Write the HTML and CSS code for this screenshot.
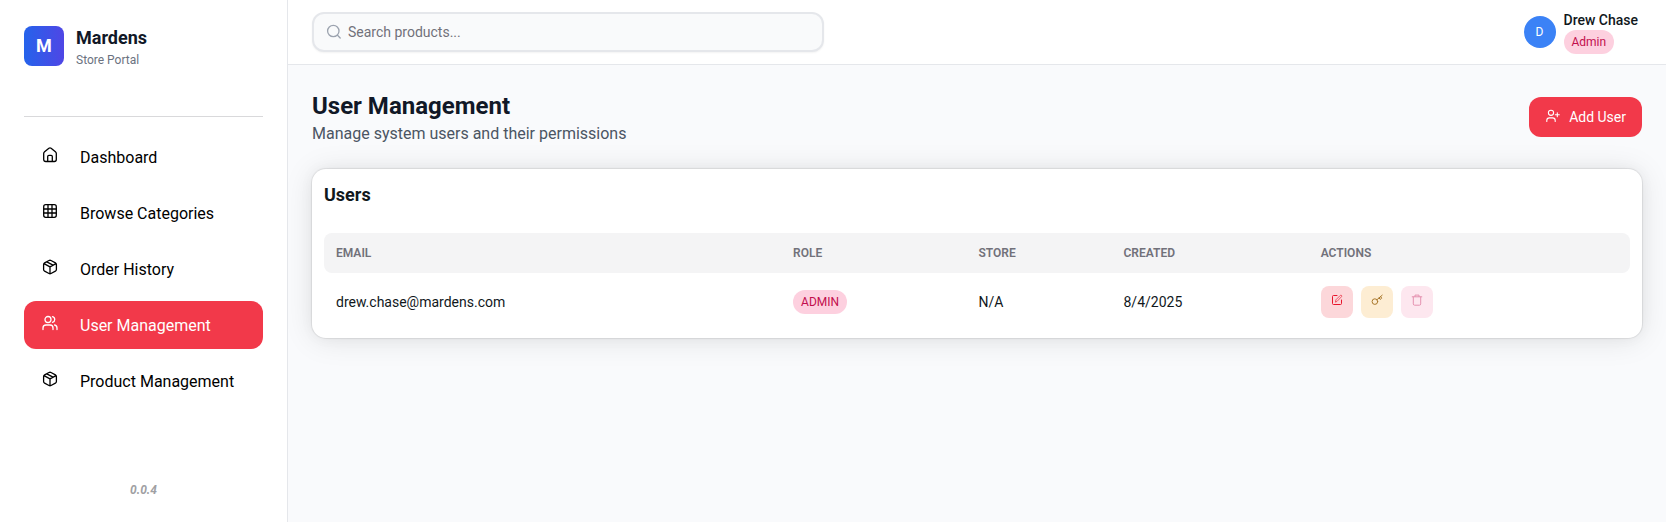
FILE: index.html
```
<!DOCTYPE html>
<html lang="en">
<head>
<meta charset="utf-8">
<title>User Management - Mardens Store Portal</title>
<link rel="stylesheet" href="styles.css">
</head>
<body>
<svg class="sprite" aria-hidden="true">
  <symbol id="box" viewBox="0 0 16 16">
    <path d="M7 1.500q1-.5 2 0l4.400 2.300q1 .5 1 1.700v5q0 1.200-1 1.700L9 14.500q-1 .5-2 0l-4.400-2.300q-1-.5-1-1.700v-5q0-1.200 1-1.700zM2 4.700l6 3.100 6-3.100M8 7.800v6.900M4.800 2.900l6.200 3.200"/>
  </symbol>
</svg>
<div class="app">
  <aside class="sidebar">
    <div class="brand">
      <div class="logo">M</div>
      <div>
        <div class="brand-name">Mardens</div>
        <div class="brand-sub">Store Portal</div>
      </div>
    </div>
    <nav class="nav">
      <a class="nav-item" href="#"><svg class="icon" viewBox="0 0 16 16"><path d="M1.700 6.500Q1.700 5.700 2.300 5.100L6.900 1.300q1.100-.8 2.200 0l4.600 3.800q.6.6.6 1.400v6q0 2-2 2H3.700q-2 0-2-2zM5.700 14.500V9.500q0-1.200 1.200-1.200h2.200q1.200 0 1.200 1.200v5"/></svg><span>Dashboard</span></a>
      <a class="nav-item" href="#"><svg class="icon" viewBox="0 0 16 16"><rect x="1.700" y="1.700" width="12.600" height="12.600" rx="2"/><path d="M6 1.700v12.600M10 1.700v12.600M1.700 6h12.600M1.700 10h12.600"/></svg><span>Browse Categories</span></a>
      <a class="nav-item" href="#"><svg class="icon"><use href="#box"/></svg><span>Order History</span></a>
      <a class="nav-item active" href="#" aria-current="page"><svg class="icon" viewBox="0 0 16 16"><circle cx="6" cy="4.500" r="3"/><path d="M1 14.500v-1.500q0-3 3-3h4q3 0 3 3v1.500M10.500 1.600a3 3 0 0 1 0 5.800M12.600 10q2.400.6 2.400 3v1.500"/></svg><span>User Management</span></a>
      <a class="nav-item" href="#"><svg class="icon"><use href="#box"/></svg><span>Product Management</span></a>
    </nav>
    <div class="version">0.0.4</div>
  </aside>
  <div class="page">
    <header class="topbar">
      <label class="search">
        <svg class="icon" viewBox="0 0 16 16"><circle cx="7.300" cy="7" r="5.700"/><path d="m11.500 11.300 2.700 2.700"/></svg>
        <input type="search" placeholder="Search products..." aria-label="Search products">
      </label>
      <button class="account" type="button">
        <span class="avatar">D</span>
        <span class="account-text">
          <span class="account-name">Drew Chase</span>
          <span class="chip">Admin</span>
        </span>
      </button>
    </header>
    <main class="main">
      <div class="heading">
        <div>
          <h1>User Management</h1>
          <p>Manage system users and their permissions</p>
        </div>
        <button class="add" type="button"><svg class="icon" viewBox="0 0 16 16"><circle cx="6" cy="4.800" r="2.600"/><path d="M1.800 13.500v-1q0-2.600 2.600-2.600h3.200q2.600 0 2.600 2.600v1M12.300 4.800v4M10.300 6.800h4"/></svg><span>Add User</span></button>
      </div>
      <section class="card">
        <h2>Users</h2>
        <table>
          <colgroup><col class="c-email"><col class="c-role"><col class="c-store"><col class="c-created"><col class="c-actions"></colgroup>
          <thead>
            <tr><th>EMAIL</th><th>ROLE</th><th>STORE</th><th>CREATED</th><th>ACTIONS</th></tr>
          </thead>
          <tbody>
            <tr>
              <td>drew.chase@mardens.com</td>
              <td><span class="chip">ADMIN</span></td>
              <td>N/A</td>
              <td>8/4/2025</td>
              <td>
                <div class="actions">
                  <button class="act edit" type="button" aria-label="Edit user"><svg viewBox="0 0 12 12"><path d="M6 1.500H2.500q-1 0-1 1v7q0 1 1 1h7q1 0 1-1V6"/><path class="soft" d="m4.500 7.800.4-2L9.300 1.400q.6-.5 1.200 0 .6.700 0 1.300L6.200 7.200z"/></svg></button>
                  <button class="act key" type="button" aria-label="Reset password"><svg viewBox="0 0 12 12"><circle cx="3.900" cy="7.600" r="2.800"/><path d="m6 5.700 5.200-4.500M8.100 4l1.100 1.400 1.500-1.200-1-1.500"/></svg></button>
                  <button class="act trash" type="button" aria-label="Delete user" disabled><svg viewBox="0 0 12 12"><path d="M1.200 2.800h9.600M4 2.600V1.100h4v1.500M2.300 3v6.900q0 1.300 1.300 1.300h4.800q1.300 0 1.300-1.300V3"/></svg></button>
                </div>
              </td>
            </tr>
          </tbody>
        </table>
      </section>
    </main>
  </div>
</div>
</body>
</html>
```
FILE: styles.css
```
* { box-sizing: border-box; }
body {
  margin: 0;
  font-family: Roboto, "Liberation Sans", sans-serif;
  font-size: 14px;
  line-height: 20px;
  color: #11181c;
}
h1, h2, p { margin: 0; }
button { font: inherit; border: 0; cursor: pointer; }
svg { fill: none; stroke: currentColor; stroke-linecap: round; stroke-linejoin: round; }
.sprite { display: none; }
.icon { width: 16px; height: 16px; flex: none; stroke-width: 1.3; }

.app { display: flex; min-height: 100vh; }
.sidebar {
  position: sticky;
  top: 0;
  z-index: 2;
  display: flex;
  flex: none;
  flex-direction: column;
  width: 288px;
  height: 100vh;
  padding: 24px;
  background: #fff;
  border-right: 1px solid #e5e7eb;
}
.brand {
  display: flex;
  align-items: center;
  gap: 12px;
  padding-bottom: 48px;
  border-bottom: 1px solid #d9d9db;
}
.logo {
  display: grid;
  place-items: center;
  width: 40px;
  height: 40px;
  border-radius: 8px;
  background: linear-gradient(to right, #2563eb, #4f46e5);
  color: #fff;
  font-size: 18px;
  font-weight: 700;
}
.brand-name { font-size: 18px; line-height: 28px; font-weight: 700; color: #111827; }
.brand-sub { font-size: 12px; line-height: 16px; color: #6b7280; }
.nav { display: flex; flex-direction: column; gap: 8px; padding-top: 16px; }
.nav-item {
  display: flex;
  align-items: center;
  gap: 22px;
  height: 48px;
  padding: 2px 18px 0;
  border-radius: 12px;
  color: #000;
  font-size: 16px;
  line-height: 24px;
  text-decoration: none;
}
.nav-item .icon { margin-bottom: 6px; }
.nav-item.active { background: #f2394a; color: #fff; }
.version {
  margin-top: auto;
  text-align: center;
  font-size: 12px;
  line-height: 16px;
  font-weight: 700;
  font-style: italic;
  color: #a0a0a3;
}

.page { flex: 1; min-width: 0; background: #f9fafc; }
.topbar {
  position: relative;
  z-index: 1;
  display: flex;
  align-items: center;
  justify-content: space-between;
  height: 65px;
  padding: 0 24px;
  background: #fff;
  border-bottom: 1px solid #e5e7eb;
}
.search {
  display: flex;
  align-items: center;
  gap: 6px;
  flex: 0 1 512px;
  height: 40px;
  padding: 0 12px;
  border: 2px solid #e5e7eb;
  border-radius: 12px;
  background: #f9fafb;
  box-shadow: 0 1px 2px rgba(0, 0, 0, .05);
  color: #9ca3af;
}
.search input {
  flex: 1;
  min-width: 0;
  padding: 0;
  border: 0;
  outline: 0;
  background: none;
  font: inherit;
  color: #11181c;
}
.search input::placeholder { color: #71717a; opacity: 1; }
.account {
  display: flex;
  align-items: center;
  gap: 8px;
  padding: 0 4px 0 0;
  background: none;
  color: #11181c;
}
.avatar {
  display: grid;
  place-items: center;
  width: 32px;
  height: 32px;
  border-radius: 50%;
  background: #3b82f6;
  color: #fff;
  font-size: 12px;
}
.account-text { display: flex; flex-direction: column; align-items: flex-start; }
.account-name { font-weight: 500; }
.chip {
  display: inline-block;
  height: 24px;
  padding: 0 8px;
  border-radius: 12px;
  background: #fdd0df;
  color: #c20e4d;
  font-size: 12px;
  line-height: 24px;
}

.main { padding: 24px; }
.heading { display: flex; align-items: center; justify-content: space-between; margin-bottom: 24px; }
.heading h1 { font-size: 24px; line-height: 34px; font-weight: 700; color: #111827; }
.heading p { font-size: 16px; line-height: 22px; color: #4b5563; }
.add {
  display: flex;
  align-items: center;
  gap: 8px;
  height: 40px;
  padding: 0 16px;
  border-radius: 12px;
  background: #f2394a;
  color: #fff;
}
.add .icon { margin-bottom: 2px; stroke-width: 1.1; }

.card {
  padding: 12px;
  border-radius: 14px;
  background: #fff;
  box-shadow: 0 0 15px rgba(0, 0, 0, .04), 0 2px 30px rgba(0, 0, 0, .1), 0 0 1px 1px rgba(0, 0, 0, .08);
}
.card h2 { padding-bottom: 24px; font-size: 18px; line-height: 28px; font-weight: 700; }
table { width: 100%; table-layout: fixed; border-collapse: separate; border-spacing: 0; }
.c-email { width: 35%; }
.c-role { width: 14.2%; }
.c-store { width: 11.1%; }
.c-created { width: 15.1%; }
.c-actions { width: 24.6%; }
th {
  height: 40px;
  padding: 0 12px;
  background: #f4f4f5;
  color: #71717a;
  font-size: 12px;
  font-weight: 600;
  text-align: left;
}
th:first-child { border-radius: 8px 0 0 8px; }
th:last-child { border-radius: 0 8px 8px 0; }
td { padding: 13px 12px 8px; }
.actions { display: flex; gap: 8px; }
.act {
  display: grid;
  place-items: center;
  width: 32px;
  height: 32px;
  padding: 0 0 4px;
  border-radius: 8px;
}
.act svg { width: 12px; height: 12px; }
.edit { background: #fcd7da; color: #e8152c; }
.edit .soft { opacity: .65; }
.key { background: #fdedd3; color: #a9782c; }
.trash { background: #fde7ef; color: #e492b0; cursor: default; }
```
